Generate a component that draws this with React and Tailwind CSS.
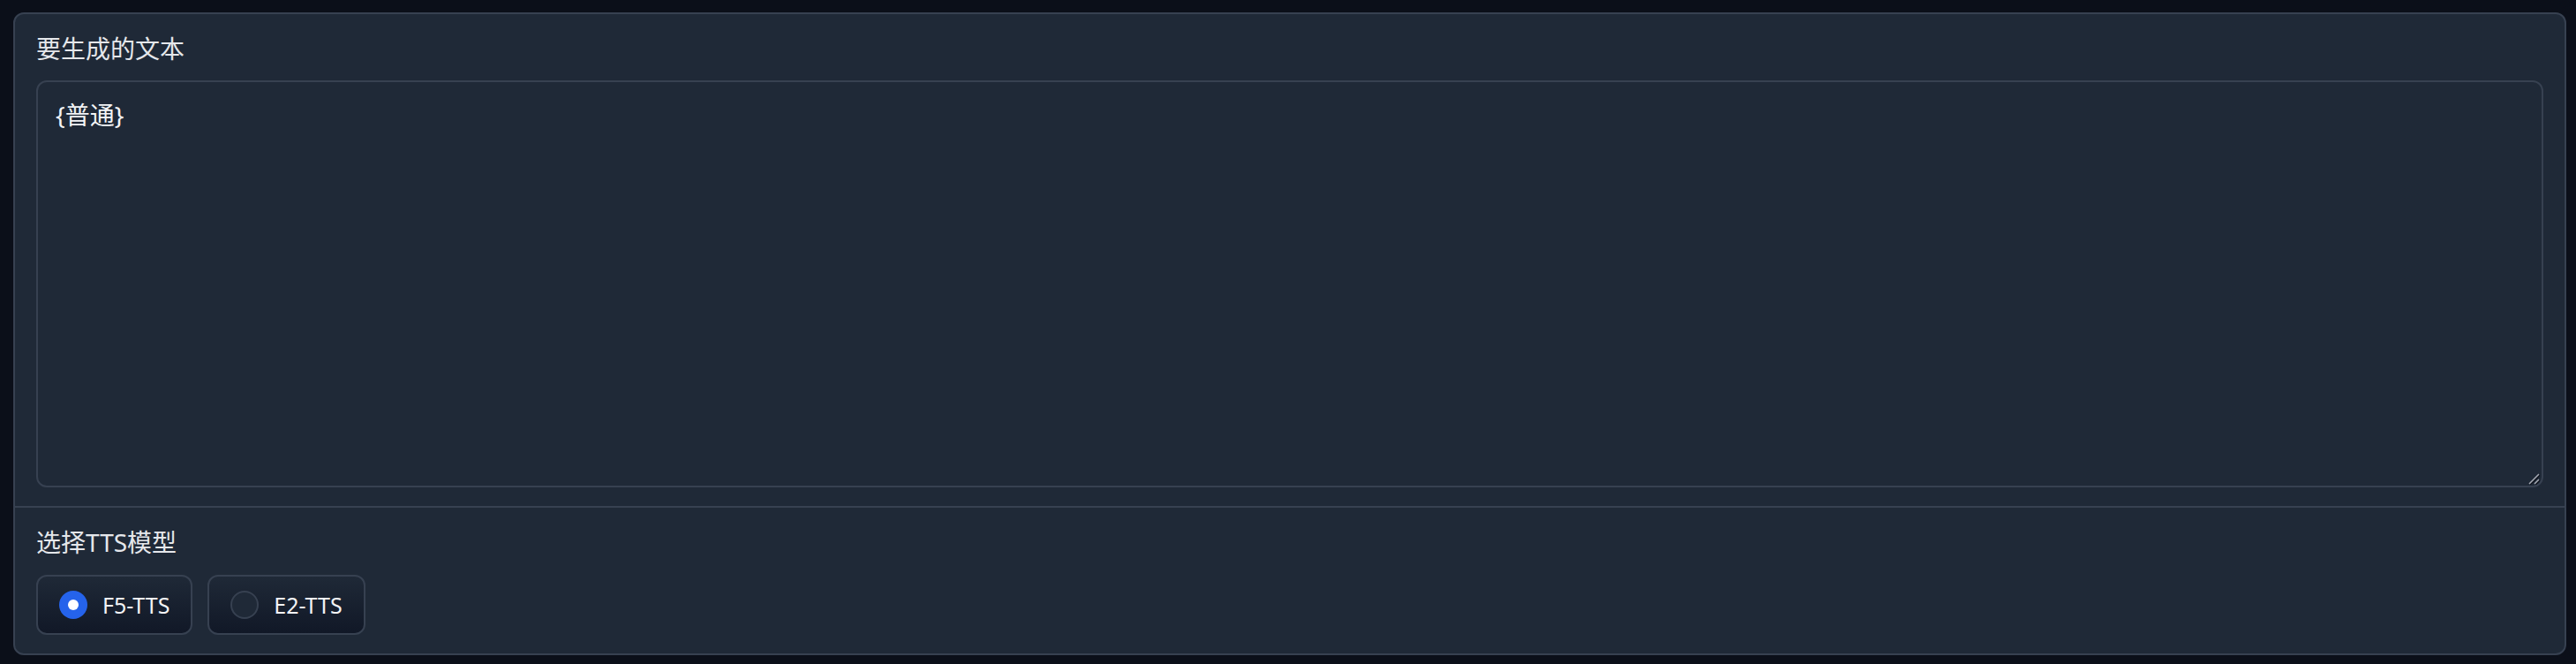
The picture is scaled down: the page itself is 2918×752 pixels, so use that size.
import { useState } from 'react';

const FONT = "font-['Noto_Sans','Noto_Sans_CJK_SC',sans-serif]";

// Single radio pill, mimics the gradio dark theme
const RadioOption = ({ label, checked, onSelect }) => (
  <button
    type="button"
    onClick={onSelect}
    className="flex h-[68px] items-center gap-[17px] rounded-[12px] border-2 border-[#374151] bg-gradient-to-t from-[#111827] to-[#1f2937] px-[24px]"
  >
    {checked ? (
      <span className="flex h-[32px] w-[32px] items-center justify-center rounded-full bg-[#2563eb]">
        <span className="h-[12px] w-[12px] rounded-full bg-white"></span>
      </span>
    ) : (
      <span className="h-[32px] w-[32px] rounded-full border-2 border-[#374151] bg-[#1f2937]"></span>
    )}
    <span className="text-[25px] leading-none text-[#f3f4f6]">{label}</span>
  </button>
);

const App = () => {
  const [model, setModel] = useState('F5-TTS');

  return (
    <div className={`h-[752px] w-[2918px] bg-[#0b0f19] pt-[14px] pl-[15px] ${FONT}`}>
      <div className="flex w-[2892px] flex-col rounded-[12px] border-2 border-[#374151] bg-[#1f2937]">
        {/* text input */}
        <div className="px-[24px] pt-[18px] pb-[21px]">
          <div className="mb-[15px] text-[28px] leading-[42px] text-[#e5e7eb]">要生成的文本</div>
          <div className="relative">
            <textarea
              defaultValue="{普通}"
              className={`block h-[461px] w-full resize-none rounded-[12px] border-2 border-[#374151] bg-[#1f2937] px-[20px] pt-[16px] text-[28px] leading-[42px] text-[#f3f4f6] outline-none ${FONT}`}
            />
            {/* resize grip */}
            <svg className="pointer-events-none absolute right-[4px] bottom-[3px] h-[14px] w-[14px]" viewBox="0 0 14 14">
              <path d="M13 2 L2 13 M13 8 L8 13" stroke="#0b0f19" strokeWidth="2" transform="translate(1 0.5)" />
              <path d="M13 2 L2 13 M13 8 L8 13" stroke="#a3a8b2" strokeWidth="1.6" />
            </svg>
          </div>
        </div>

        {/* model selection */}
        <div className="border-t-2 border-[#374151] px-[24px] pt-[18px] pb-[21px]">
          <div className="mb-[16px] text-[28px] leading-[42px] text-[#e5e7eb]">选择TTS模型</div>
          <div className="flex gap-[17px]">
            {['F5-TTS', 'E2-TTS'].map((m) => (
              <RadioOption key={m} label={m} checked={model === m} onSelect={() => setModel(m)} />
            ))}
          </div>
        </div>
      </div>
    </div>
  );
};

export default App;
